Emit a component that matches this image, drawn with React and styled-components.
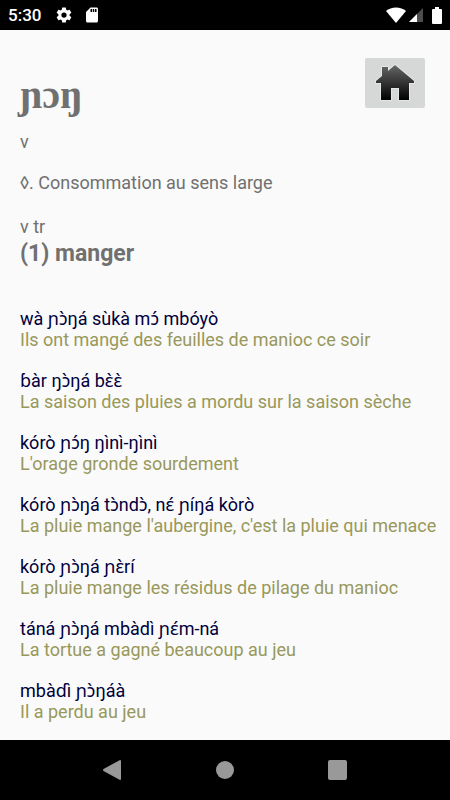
import React from "react";
import styled, { createGlobalStyle } from "styled-components";

const GlobalStyle = createGlobalStyle`
  * { box-sizing: border-box; }
  body {
    margin: 0;
    background: #fafafa;
    font-family: Roboto, "Noto Sans", sans-serif;
  }
`;

const Screen = styled.div`
  display: flex;
  flex-direction: column;
  min-height: 100vh;
  background: #fafafa;
`;

const StatusBar = styled.header`
  display: flex;
  align-items: center;
  justify-content: space-between;
  height: 30px;
  padding: 0 8px;
  background: #000;
  color: #fff;
`;

const StatusGroup = styled.div`
  display: flex;
  align-items: center;
  gap: ${({ $gap }) => $gap}px;
`;

const Clock = styled.time`
  margin-right: 4px;
  font-size: 17px;
  line-height: 30px;
  font-weight: 500;
`;

const Entry = styled.main`
  flex: 1;
  padding: 28px 10px 18px 20px;
  color: #707070;
`;

const EntryHeader = styled.div`
  display: flex;
  align-items: flex-start;
  justify-content: space-between;
  margin-right: 15px;
`;

const Headword = styled.h1`
  margin: 7px 0 6px;
  font-family: "Liberation Serif", serif;
  font-size: 40px;
  line-height: 60px;
  font-weight: 700;
`;

const HomeButton = styled.button`
  display: flex;
  align-items: center;
  justify-content: center;
  width: 60px;
  height: 50px;
  padding: 0;
  border: 0;
  border-radius: 2px;
  background: #d6d7d7;
  cursor: pointer;
`;

const Line = styled.p`
  margin: ${({ $top = 0 }) => $top}px 0 0;
  font-size: 18px;
  line-height: 21px;
`;

const Sense = styled.h2`
  margin: 3px 0 0;
  font-size: 23px;
  line-height: 28px;
  font-weight: 700;
`;

const Examples = styled.ul`
  display: flex;
  flex-direction: column;
  gap: 20px;
  margin: 40px 0 0;
  padding: 0;
  list-style: none;
`;

const Example = styled.li`
  font-size: 18px;
  line-height: 21px;
`;

const Phrase = styled.p`
  margin: 0;
  color: ${({ $translation }) => ($translation ? "#98985a" : "#00003c")};
`;

const NavBar = styled.nav`
  display: flex;
  align-items: center;
  justify-content: center;
  gap: 53px;
  height: 60px;
  background: #000;
`;

const NavButton = styled.button`
  display: flex;
  align-items: center;
  justify-content: center;
  width: 60px;
  height: 60px;
  padding: 0;
  border: 0;
  background: transparent;
  cursor: pointer;
`;

const examples = [
  ["wà ɲɔ̀ŋá sùkà mɔ́ mbóyò", "Ils ont mangé des feuilles de manioc ce soir"],
  ["ɓàr ŋɔ̀ŋá bɛ̀ɛ̀", "La saison des pluies a mordu sur la saison sèche"],
  ["kórò ɲɔ́ŋ ŋìnì-ŋìnì", "L'orage gronde sourdement"],
  ["kórò ɲɔ̀ŋá tɔ̀ndɔ̀, nɛ́ ɲíŋá kòrò", "La pluie mange l'aubergine, c'est la pluie qui menace"],
  ["kórò ɲɔ̀ŋá ɲɛ̀rí", "La pluie mange les résidus de pilage du manioc"],
  ["táná ɲɔ̀ŋá mbàdì ɲɛ́m-ná", "La tortue a gagné beaucoup au jeu"],
  ["mbàɗì ɲɔ̀ŋáà", "Il a perdu au jeu"],
];

const GearIcon = () => (
  <svg width="18" height="18" viewBox="0 0 24 24" fill="#fff" aria-hidden="true">
    <path d="M19.43 12.98c.04-.32.07-.64.07-.98s-.03-.66-.07-.98l2.11-1.65c.19-.15.24-.42.12-.64l-2-3.46c-.12-.22-.39-.3-.61-.22l-2.49 1c-.52-.4-1.08-.73-1.69-.98l-.38-2.65C14.46 2.18 14.25 2 14 2h-4c-.25 0-.46.18-.49.42l-.38 2.65c-.61.25-1.17.59-1.69.98l-2.49-1c-.23-.09-.49 0-.61.22l-2 3.46c-.13.22-.07.49.12.64l2.11 1.65c-.04.32-.07.65-.07.98s.03.66.07.98l-2.11 1.65c-.19.15-.24.42-.12.64l2 3.46c.12.22.39.3.61.22l2.49-1c.52.4 1.08.73 1.69.98l.38 2.65c.03.24.24.42.49.42h4c.25 0 .46-.18.49-.42l.38-2.65c.61-.25 1.17-.59 1.69-.98l2.49 1c.23.09.49 0 .61-.22l2-3.46c.12-.22.07-.49-.12-.64zM12 15.5a3.5 3.5 0 1 1 0-7 3.5 3.5 0 0 1 0 7z" />
  </svg>
);

const CardIcon = () => (
  <svg width="18" height="18" viewBox="0 0 24 24" fill="#fff" aria-hidden="true">
    <path d="M18 2h-8L4 8v12c0 1.100.9 2 2 2h12c1.100 0 2-.9 2-2V4c0-1.100-.9-2-2-2zm-6 6h-2V4h2v4zm3 0h-2V4h2v4zm3 0h-2V4h2v4z" />
  </svg>
);

const WifiIcon = () => (
  <svg width="20" height="16" viewBox="0 0 20 16" aria-hidden="true">
    <path d="M0 4C5-.7 15-.7 20 4L10 16z" fill="#fff" />
  </svg>
);

const SignalIcon = () => (
  <svg width="14" height="14" viewBox="0 0 14 14" aria-hidden="true">
    <path d="M14 0v14H0z" fill="#4d4d4d" />
    <path d="M8 6v8H0z" fill="#fff" />
  </svg>
);

const BatteryIcon = () => (
  <svg width="10" height="17" viewBox="0 0 10 17" aria-hidden="true">
    <path d="M3 0h4v2h2q1 0 1 1v13q0 1-1 1H1q-1 0-1-1V3q0-1 1-1h2z" fill="#fff" />
  </svg>
);

const HouseIcon = () => (
  <svg width="40" height="38" viewBox="0 0 40 38" aria-hidden="true">
    <defs>
      <linearGradient id="house" x1="0" y1="0" x2="0" y2="1">
        <stop offset="0" stopColor="#666" />
        <stop offset="0.5" stopColor="#343434" />
        <stop offset="1" stopColor="#000" />
      </linearGradient>
    </defs>
    <path
      d="M20 1L13 7V3H7v9L1 17v2h5v17h10V24h8v12h10V19h5v-2z"
      fill="url(#house)"
      stroke="#e5e6e6"
      strokeWidth="2"
      strokeLinejoin="round"
      paintOrder="stroke"
    />
  </svg>
);

const BackIcon = () => (
  <svg width="18" height="20" viewBox="0 0 18 20" fill="#999" aria-hidden="true">
    <path d="M17 0Q18 0 18 1v18q0 1-1 1L.5 11Q-.5 10 .5 9z" />
  </svg>
);

const CircleIcon = () => (
  <svg width="18" height="18" viewBox="0 0 18 18" aria-hidden="true">
    <circle cx="9" cy="9" r="9" fill="#999" />
  </svg>
);

const SquareIcon = () => (
  <svg width="20" height="20" viewBox="0 0 20 20" aria-hidden="true">
    <rect width="19" height="20" rx="2" fill="#999" />
  </svg>
);

export default function App() {
  return (
    <Screen>
      <GlobalStyle />
      <StatusBar>
        <StatusGroup $gap={10}>
          <Clock>5:30</Clock>
          <GearIcon />
          <CardIcon />
        </StatusGroup>
        <StatusGroup $gap={9}>
          <StatusGroup $gap={3}>
            <WifiIcon />
            <SignalIcon />
          </StatusGroup>
          <BatteryIcon />
        </StatusGroup>
      </StatusBar>
      <Entry>
        <EntryHeader>
          <Headword>ɲɔŋ</Headword>
          <HomeButton type="button" aria-label="Accueil">
            <HouseIcon />
          </HomeButton>
        </EntryHeader>
        <Line>v</Line>
        <Line $top={20}>◊. Consommation au sens large</Line>
        <Line $top={23}>v tr</Line>
        <Sense>(1) manger</Sense>
        <Examples>
          {examples.map(([source, translation]) => (
            <Example key={source}>
              <Phrase lang="und">{source}</Phrase>
              <Phrase lang="fr" $translation>{translation}</Phrase>
            </Example>
          ))}
        </Examples>
      </Entry>
      <NavBar aria-label="Navigation">
        <NavButton type="button" aria-label="Retour"><BackIcon /></NavButton>
        <NavButton type="button" aria-label="Écran d'accueil"><CircleIcon /></NavButton>
        <NavButton type="button" aria-label="Applications récentes"><SquareIcon /></NavButton>
      </NavBar>
    </Screen>
  );
}
